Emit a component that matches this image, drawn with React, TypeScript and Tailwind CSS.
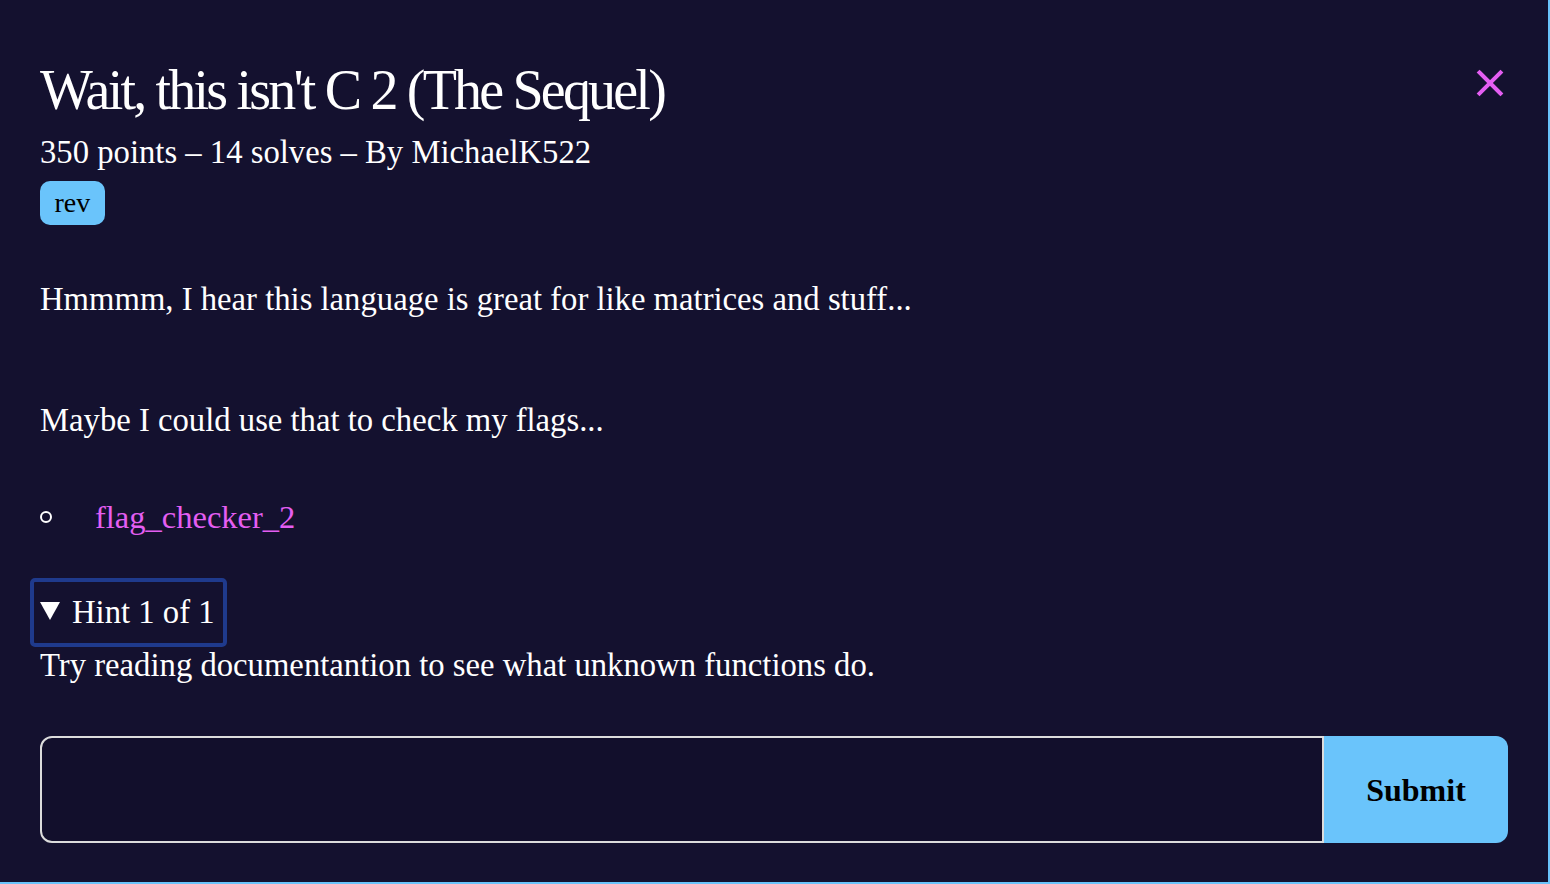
export default function App() {
  return (
    <div className="w-[1550px] h-[884px] bg-[#14112f] font-['Liberation_Serif',serif] text-white border-r-2 border-b-2 border-[#6ac4fb] overflow-hidden">
      <div className="relative px-10 pt-[58px]">
        <button className="absolute right-[44px] top-[69px] text-[#e45ef2]">
          <svg width="28" height="28" viewBox="0 0 28 28" stroke="currentColor" strokeWidth="4" strokeLinecap="square">
            <path d="M3.5 3.5L24.5 24.5M24.5 3.5L3.5 24.5" />
          </svg>
        </button>
        <h1 className="text-[56px] leading-[64px] tracking-[-0.05em]">Wait, this isn't C 2 (The Sequel)</h1>
        <div className="text-[32.7px] leading-[40px] mt-[10px]">350 points – 14 solves – By MichaelK522</div>
        <div className="mt-[9px] inline-block bg-[#6ac4fb] text-black text-[28px] leading-[44px] px-[14.5px] rounded-[10px]">rev</div>

        <p className="mt-[54px] text-[32.7px] leading-[40px]">Hmmmm, I hear this language is great for like matrices and stuff...</p>
        <p className="mt-[81px] text-[32.7px] leading-[40px]">Maybe I could use that to check my flags...</p>
        <ul className="mt-[57px] text-[32.5px] leading-[40px]">
          <li className="flex items-center">
            <span className="w-[12px] h-[12px] rounded-full border-2 border-white mr-[43px]" />
            <a className="text-[#e45ef2]">flag_checker_2</a>
          </li>
        </ul>
        <div className="mt-[41px] ml-[-10px] w-[197px] h-[69px] border-[4px] border-[#1f3a8c] rounded-[5px] flex items-center pl-[6px] text-[32.7px]">
          <svg width="20" height="18" viewBox="0 0 20 18" className="mr-[12px] mb-[4px]" fill="white">
            <path d="M0 0H20L10 18Z" />
          </svg>
          <span>Hint 1 of 1</span>
        </div>
        <p className="mt-[-2px] text-[32.7px] leading-[40px]">Try reading documentantion to see what unknown functions do.</p>

        <div className="mt-[51px] flex h-[107px]">
          <div className="flex-1 border-2 border-[#dcdcdc] rounded-l-[12px] bg-[#120f2c]" />
          <button className="w-[184px] bg-[#6ac4fb] rounded-r-[12px] text-black font-bold text-[32px]">Submit</button>
        </div>
      </div>
    </div>
  );
}
